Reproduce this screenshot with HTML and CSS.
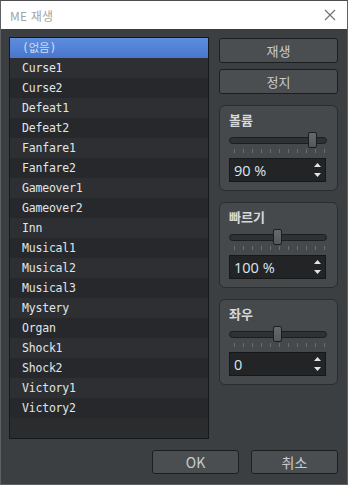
FILE: index.html
```html
<!DOCTYPE html>
<html lang="ko">

<head>
    <meta charset="UTF-8">
    <title>ME 재생</title>
    <link rel="stylesheet" href="styles.css">
</head>

<body>
    <div class="dialog">
        <div class="title-bar">
            <span class="title-text">ME 재생</span>
            <span class="title-close">
                <svg width="12" height="12" viewBox="0 0 12 12"><path d="M1 1 L11 11 M11 1 L1 11" stroke="#707070" stroke-width="1.1" fill="none"/></svg>
            </span>
        </div>
        <div class="dialog-body">
            <div class="dialog-main">
                <ul class="me-list">
                    <li class="me-item me-item-active">(없음)</li>
                    <li class="me-item">Curse1</li>
                    <li class="me-item">Curse2</li>
                    <li class="me-item">Defeat1</li>
                    <li class="me-item">Defeat2</li>
                    <li class="me-item">Fanfare1</li>
                    <li class="me-item">Fanfare2</li>
                    <li class="me-item">Gameover1</li>
                    <li class="me-item">Gameover2</li>
                    <li class="me-item">Inn</li>
                    <li class="me-item">Musical1</li>
                    <li class="me-item">Musical2</li>
                    <li class="me-item">Musical3</li>
                    <li class="me-item">Mystery</li>
                    <li class="me-item">Organ</li>
                    <li class="me-item">Shock1</li>
                    <li class="me-item">Shock2</li>
                    <li class="me-item">Victory1</li>
                    <li class="me-item">Victory2</li>
                </ul>
                <div class="side-panel">
                    <button class="btn btn-play">재생</button>
                    <button class="btn btn-stop">정지</button>

                    <div class="group-box">
                        <div class="group-label">볼륨</div>
                        <div class="slider">
                            <div class="slider-track"></div>
                            <div class="slider-handle" style="left: 79px;"></div>
                        </div>
                        <div class="slider-ticks"></div>
                        <div class="spin-box">
                            <span class="spin-value">90 %</span>
                            <svg class="spin-arrows" width="7" height="16" viewBox="0 0 7 16"><path d="M3.5 1 L7 5 L0 5 Z M0 11 L7 11 L3.5 15 Z" fill="#e2e4e6"/></svg>
                        </div>
                    </div>

                    <div class="group-box">
                        <div class="group-label">빠르기</div>
                        <div class="slider">
                            <div class="slider-track"></div>
                            <div class="slider-handle" style="left: 44px;"></div>
                        </div>
                        <div class="slider-ticks"></div>
                        <div class="spin-box">
                            <span class="spin-value">100 %</span>
                            <svg class="spin-arrows" width="7" height="16" viewBox="0 0 7 16"><path d="M3.5 1 L7 5 L0 5 Z M0 11 L7 11 L3.5 15 Z" fill="#e2e4e6"/></svg>
                        </div>
                    </div>

                    <div class="group-box">
                        <div class="group-label">좌우</div>
                        <div class="slider">
                            <div class="slider-track"></div>
                            <div class="slider-handle" style="left: 44px;"></div>
                        </div>
                        <div class="slider-ticks"></div>
                        <div class="spin-box">
                            <span class="spin-value">0</span>
                            <svg class="spin-arrows" width="7" height="16" viewBox="0 0 7 16"><path d="M3.5 1 L7 5 L0 5 Z M0 11 L7 11 L3.5 15 Z" fill="#e2e4e6"/></svg>
                        </div>
                    </div>
                </div>
            </div>
            <div class="dialog-footer">
                <button class="btn btn-footer">OK</button>
                <button class="btn btn-footer">취소</button>
            </div>
        </div>
    </div>
</body>

</html>
```

FILE: styles.css
```css
* {
    box-sizing: border-box;
}

body {
    margin: 0;
    background-color: #3c3f41;
    font-family: "Noto Sans CJK KR", "Noto Sans", sans-serif;
}

.dialog {
    width: 348px;
    height: 485px;
    border: 1px solid #5e6062;
    border-top-color: #4a4c4e;
    background-color: #3c3f41;
    display: flex;
    flex-direction: column;
}

.title-bar {
    height: 30px;
    background-color: #fff;
    display: flex;
    align-items: center;
    justify-content: space-between;
    padding: 0 9px 0 9px;
}

.title-text {
    font-size: 12px;
    color: #a3a3a3;
    letter-spacing: 0.2px;
}

.title-close {
    display: flex;
    margin-right: 2px;
}

.dialog-body {
    flex: 1;
    padding: 8px 9px 10px 8px;
    display: flex;
    flex-direction: column;
}

.dialog-main {
    display: flex;
    gap: 10px;
}

.me-list {
    width: 201px;
    height: 402px;
    margin: 0;
    padding: 0;
    list-style: none;
    background-color: #2a2c2e;
    border: 1px solid #17181a;
}

.me-item {
    height: 20px;
    line-height: 20px;
    padding-left: 12px;
    font-family: "DejaVu Sans Mono", "Noto Sans CJK KR", monospace;
    font-size: 11.5px;
    letter-spacing: -0.2px;
    color: #e2e5e8;
    background-color: #2d2f32;
}

.me-item:nth-child(odd) {
    background-color: #26282b;
}

.me-item-active,
.me-item-active:nth-child(odd) {
    background: linear-gradient(#5f8ddd, #4876cc);
    color: #cfdcf6;
}

.side-panel {
    width: 119px;
    display: flex;
    flex-direction: column;
}

.btn {
    background-color: #4b4e51;
    border: 1px solid #1d1e20;
    border-radius: 3px;
    color: #c9cbcd;
    font-family: "Noto Sans CJK KR", "Noto Sans", sans-serif;
    font-size: 13px;
    padding: 0;
    cursor: pointer;
}

.btn-play,
.btn-stop {
    height: 25px;
}

.btn-play {
    margin-top: 1px;
}

.btn-stop {
    margin-top: 6px;
}

.group-box {
    height: 86px;
    margin-top: 11px;
    background-color: #46494c;
    border: 1px solid #2b2c2e;
    border-radius: 6px;
    padding: 5px 10px 0 9px;
}

.group-label {
    height: 18px;
    font-size: 13px;
    font-weight: bold;
    color: #d6d8da;
    line-height: 18px;
}

.slider {
    position: relative;
    height: 17px;
    margin-top: 3px;
}

.slider-track {
    position: absolute;
    left: 0;
    right: 0;
    top: 5px;
    height: 7px;
    background-color: #2f3133;
    border: 1px solid #1c1d1f;
    border-radius: 4px;
}

.slider-handle {
    position: absolute;
    top: 0;
    width: 9px;
    height: 16px;
    background: linear-gradient(#67696c, #55585b);
    border: 1px solid #1c1d1f;
    border-radius: 2px;
}

.slider-ticks {
    height: 4px;
    margin: 0 4px 0 5px;
    background: repeating-linear-gradient(to right, #6a6c6f 0, #6a6c6f 1px, transparent 1px, transparent 9px);
    width: 91px;
}

.spin-box {
    height: 24px;
    margin-top: 5px;
    margin-right: 1px;
    background-color: #222426;
    border: 1px solid #161719;
    display: flex;
    align-items: center;
    justify-content: space-between;
    padding: 0 4px 0 4px;
}

.spin-value {
    font-family: "Open Sans", "Liberation Sans", sans-serif;
    font-size: 14.5px;
    color: #dbe6f2;
}

.spin-arrows {
    display: block;
}

.dialog-footer {
    display: flex;
    justify-content: flex-end;
    gap: 12px;
    margin-top: 11px;
}

.btn-footer {
    width: 87px;
    height: 24px;
    font-size: 14px;
}
```
